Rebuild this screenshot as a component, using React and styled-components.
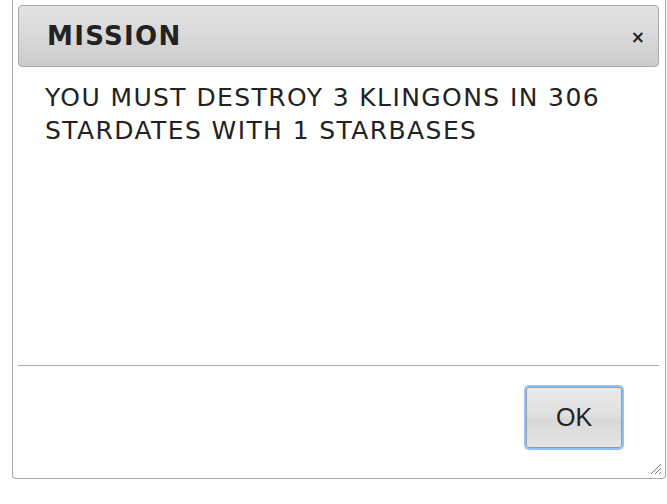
import React from "react";
import styled, { createGlobalStyle } from "styled-components";

const Global = createGlobalStyle`
  html, body {
    margin: 0;
    padding: 0;
    background: #ffffff;
  }
`;

const Page = styled.div`
  width: 667px;
  height: 504px;
  padding: 0 1px 0 12px;
  box-sizing: border-box;
`;

const Dialog = styled.div`
  position: relative;
  width: 654px;
  height: 479px;
  box-sizing: border-box;
  border: 1px solid #aaaaaa;
  border-top: none;
  border-radius: 0 0 4px 4px;
  padding: 5px 6px 0 5px;
  display: flex;
  flex-direction: column;
  background: #ffffff;
  font-family: "DejaVu Sans", Verdana, sans-serif;
  color: #222222;
`;

const TitleBar = styled.div`
  height: 62px;
  box-sizing: border-box;
  border: 1px solid #aaaaaa;
  border-radius: 4px;
  background: linear-gradient(#e2e2e2, #dadada 45%, #cccccc);
  display: flex;
  align-items: center;
  justify-content: space-between;
  padding: 0 13px 0 28px;
`;

const Title = styled.span`
  font-weight: bold;
  font-size: 26px;
  letter-spacing: 1.3px;
  color: #222222;
`;

const Close = styled.span`
  font-size: 17px;
  font-weight: bold;
  line-height: 1;
  color: #222222;
  margin-top: 2px;
`;

const Content = styled.div`
  flex: 1;
  padding: 14px 20px 0 27px;
  font-size: 25px;
  letter-spacing: 1.4px;
  line-height: 33px;
  color: #222222;
`;

const ButtonPane = styled.div`
  height: 113px;
  box-sizing: border-box;
  border-top: 1px solid #aaaaaa;
  display: flex;
  justify-content: flex-end;
  align-items: flex-start;
  padding: 21px 37px 0 0;
`;

const Button = styled.button`
  width: 96px;
  height: 61px;
  box-sizing: border-box;
  border: 1px solid #999999;
  border-radius: 3px;
  background: linear-gradient(#e9e9e9, #e0e0e0 45%, #d8d8d8 55%, #e6e6e6);
  box-shadow: 0 0 0 2px #8fc3fb;
  font-family: "Liberation Sans", Arial, sans-serif;
  font-size: 25px;
  color: #222222;
  padding: 0;
  outline: none;
`;

const Grip = styled.svg`
  position: absolute;
  right: 3px;
  bottom: 3px;
`;

export default function App() {
  return (
    <Page>
      <Global />
      <Dialog>
        <TitleBar>
          <Title>MISSION</Title>
          <Close>×</Close>
        </TitleBar>
        <Content>
          YOU MUST DESTROY 3 KLINGONS IN 306
          <br />
          STARDATES WITH 1 STARBASES
        </Content>
        <ButtonPane>
          <Button>OK</Button>
        </ButtonPane>
        <Grip width="12" height="12" viewBox="0 0 12 12">
          <path d="M11 1 L1 11 M11 5 L5 11 M11 9 L9 11" stroke="#777" strokeWidth="1" />
        </Grip>
      </Dialog>
    </Page>
  );
}
